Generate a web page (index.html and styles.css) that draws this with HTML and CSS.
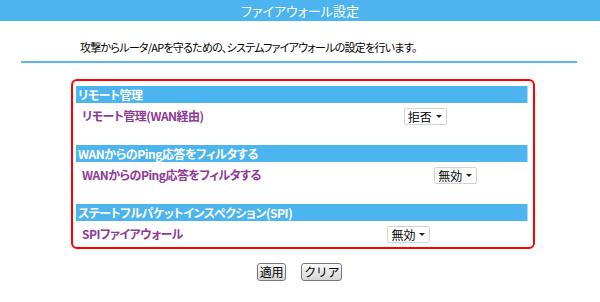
FILE: index.html
```html
<!DOCTYPE html>
<html lang="ja">
<head>
  <meta charset="UTF-8" />
  <title>ファイアウォール設定</title>
  <link rel="stylesheet" href="styles.css">
</head>
<body>
  <div class="titlebar">ファイアウォール設定</div>

  <p class="lead">攻撃からルータ/APを守るための、システムファイアウォールの設定を行います。</p>
  <div class="rule"></div>

  <div class="settings">
    <table class="sec">
      <tr><th colspan="2">リモート管理</th></tr>
      <tr>
        <td class="label">リモート管理(WAN経由)</td>
        <td class="ctl"><span class="sel"><select><option>拒否</option><option>許可</option></select></span></td>
      </tr>
    </table>

    <table class="sec">
      <tr><th colspan="2">WANからのPing応答をフィルタする</th></tr>
      <tr>
        <td class="label">WANからのPing応答をフィルタする</td>
        <td class="ctl"><span class="sel"><select><option>無効</option><option>有効</option></select></span></td>
      </tr>
    </table>

    <table class="sec">
      <tr><th colspan="2">ステートフルパケットインスペクション(SPI)</th></tr>
      <tr>
        <td class="label">SPIファイアウォール</td>
        <td class="ctl"><span class="sel"><select><option>無効</option><option>有効</option></select></span></td>
      </tr>
    </table>
  </div>

  <div class="buttons">
    <button class="btn">適用</button>
    <button class="btn">クリア</button>
  </div>
</body>
</html>
```

FILE: styles.css
```css
body {
  margin: 0;
  background: #fff;
  font-family: "Noto Sans CJK JP", "Liberation Sans", sans-serif;
  font-size: 12px;
  font-feature-settings: "palt";
  color: #000;
}
.titlebar {
  height: 21px;
  line-height: 21px;
  background: #4cb4ee;
  color: #fff;
  text-align: center;
  font-size: 13px;
}
.lead {
  margin: 0;
  padding: 18px 0 0 80px;
  height: 22px;
  line-height: 16px;
  font-size: 11px;
  letter-spacing: -0.75px;
}
.rule {
  margin: 0 23px 0 21px;
  height: 2px;
  background: #5ab8ee;
}
.settings {
  margin: 16px 0 0 71px;
  width: 452px;
  border: 2px solid #f00;
  border-radius: 6px;
  padding: 5px 5px 2px 3px;
}
.sec {
  width: 100%;
  border-collapse: collapse;
  margin-bottom: 18px;
}
.sec:last-child {
  margin-bottom: 0;
}
.sec th {
  height: 17px;
  padding: 0 0 0 2px;
  background: #4cb4ee;
  border-right: 1px solid #a9dbf7;
  color: #fff;
  font-weight: bold;
  text-align: left;
  line-height: 17px;
  letter-spacing: -0.45px;
}
.sec td {
  height: 24px;
  padding: 0 2px;
}
.label {
  padding-left: 6px !important;
  color: #8e3a96;
  font-weight: bold;
  letter-spacing: -0.5px;
}
.ctl {
  text-align: left;
  padding-right: 5px !important;
}
.sel {
  position: relative;
  display: inline-block;
  vertical-align: middle;
}
.sel select {
  appearance: none;
  -webkit-appearance: none;
  width: 43px;
  height: 17px;
  margin: 0;
  padding: 0 0 0 3px;
  border: 1px solid #d4d4d4;
  border-radius: 2px;
  background: #fff;
  font-family: inherit;
  font-size: 12px;
  line-height: 15px;
  color: #000;
  display: block;
}
.sel::after {
  content: "";
  position: absolute;
  right: 5px;
  top: 7px;
  border-left: 3px solid transparent;
  border-right: 3px solid transparent;
  border-top: 3px solid #222;
  pointer-events: none;
}
.buttons {
  display: flex;
  justify-content: center;
  gap: 15px;
  margin-top: 14px;
  padding-right: 1px;
}
.btn {
  height: 18px;
  padding: 0 2px;
  border: 1px solid #7a7a7a;
  border-radius: 3px;
  background: linear-gradient(#fafafa, #d6d6d6);
  font-family: inherit;
  font-size: 12px;
  line-height: 14px;
  letter-spacing: -0.3px;
  color: #000;
}
```
